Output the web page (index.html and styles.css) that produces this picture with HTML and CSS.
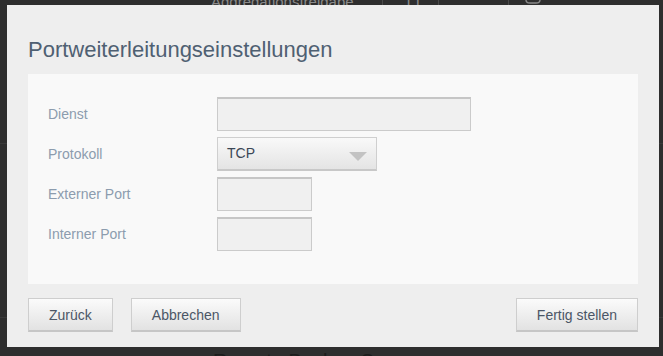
FILE: index.html
```html
<!DOCTYPE html>
<html lang="de">
<head>
<meta charset="utf-8">
<title>Portweiterleitungseinstellungen</title>
<link rel="stylesheet" href="styles.css">
</head>
<body>
<div class="page">
  <div class="bg-head">
    <div class="bg-cell bg-name">Aggregationsfreigabe</div>
    <div class="bg-cell bg-num">TT</div>
    <div class="bg-cell bg-empty"></div>
    <div class="bg-cell bg-icon">
      <svg width="18" height="5" viewBox="0 0 18 5"><path d="M2 0 Q2 3 6 3 L12 3 Q16 3 16 0" fill="none" stroke="#8a8a8a" stroke-width="1.4"/></svg>
    </div>
  </div>
  <div class="bg-row bg-row1"></div>
  <div class="bg-row bg-row2"></div>
  <div class="bg-title">Remote Backup Server</div>
</div>

<div class="dialog">
  <h1 class="dialog-title">Portweiterleitungseinstellungen</h1>
  <div class="panel">
    <div class="form-grid">
      <div class="label">Dienst</div>
      <div class="field"><div class="input input-wide"></div></div>
      <div class="label">Protokoll</div>
      <div class="field">
        <div class="select"><span class="select-value">TCP</span><span class="select-arrow"></span></div>
      </div>
      <div class="label">Externer Port</div>
      <div class="field"><div class="input input-port"></div></div>
      <div class="label">Interner Port</div>
      <div class="field"><div class="input input-port"></div></div>
    </div>
  </div>
  <div class="actions">
    <button class="btn">Zurück</button>
    <button class="btn">Abbrechen</button>
    <span class="spacer"></span>
    <button class="btn">Fertig stellen</button>
  </div>
</div>
</body>
</html>
```

FILE: styles.css
```css
html, body {
  margin: 0;
  padding: 0;
}
body {
  background: #2e2e2e;
  font-family: "Liberation Sans", Arial, sans-serif;
  overflow: hidden;
  width: 663px;
  height: 356px;
}
.page {
  height: 356px;
  overflow: hidden;
}
.bg-head {
  height: 5px;
  overflow: hidden;
  display: flex;
  align-items: flex-end;
}
.bg-cell {
  height: 5px;
  display: flex;
  align-items: flex-end;
  box-sizing: border-box;
  color: #8a8a8a;
  font-size: 15px;
  line-height: 5px;
}
.bg-name {
  width: 382px;
  padding-left: 211px;
  padding-bottom: 2px;
  line-height: 3px;
  height: 5px;
}
.bg-num {
  width: 56px;
  padding-left: 21px;
  padding-bottom: 2px;
  border-left: 1px solid #4a4a4a;
  line-height: 3px;
}
.bg-empty {
  width: 70px;
  border-left: 1px solid #4a4a4a;
}
.bg-icon {
  border-left: 1px solid #4a4a4a;
  padding-left: 15px;
  align-items: flex-start;
}
.bg-row {
  border-bottom: 1px solid #3a3a3a;
}
.bg-row1 { height: 138px; }
.bg-row2 { height: 173px; }
.bg-title {
  margin-top: 31px;
  padding-left: 213px;
  font-size: 20px;
  line-height: 24px;
  color: #1c1c1c;
}

.dialog {
  position: absolute;
  left: 7px;
  top: 5px;
  width: 652px;
  height: 342px;
  box-sizing: border-box;
  background: #eeeeee;
  padding: 32px 21px 15px;
  display: flex;
  flex-direction: column;
}
.dialog-title {
  margin: 0 0 11px;
  font-weight: normal;
  font-size: 22px;
  line-height: 26px;
  color: #4f6072;
}
.panel {
  background: #f9f9f9;
  height: 210px;
  box-sizing: border-box;
  padding: 23px 20px 33px;
}
.form-grid {
  display: grid;
  grid-template-columns: 169px 1fr;
  grid-auto-rows: 34px;
  row-gap: 6px;
  align-items: center;
}
.label {
  font-size: 14px;
  color: #8c9cae;
}
.field {
  display: flex;
  align-items: center;
  height: 34px;
}
.input {
  box-sizing: border-box;
  height: 34px;
  background: #f0f0f0;
  border: 1px solid #cbcbcb;
  border-top: 2px solid #c6c6c6;
}
.input-wide { width: 254px; }
.input-port { width: 95px; }
.select {
  box-sizing: border-box;
  width: 160px;
  height: 34px;
  display: flex;
  align-items: center;
  justify-content: space-between;
  padding: 0 9px 0 9px;
  background: linear-gradient(#f9f9f9, #e4e4e4);
  border: 1px solid #cfcfcf;
  border-bottom: 2px solid #c8c8c8;
}
.select-value {
  font-size: 14px;
  color: #3b4756;
  margin-top: -2px;
}
.select-arrow {
  width: 0;
  height: 0;
  border-left: 9px solid transparent;
  border-right: 9px solid transparent;
  border-top: 9px solid #c3c3c3;
  margin-top: 6px;
}
.actions {
  margin-top: 14px;
  display: flex;
  gap: 18px;
}
.spacer { flex: 1; }
.btn {
  box-sizing: border-box;
  height: 34px;
  padding: 0 20px;
  font-family: "Liberation Sans", Arial, sans-serif;
  font-size: 14px;
  color: #4b5666;
  background: linear-gradient(#fbfbfb, #e2e2e2);
  border: 1px solid #cecece;
  border-bottom: 2px solid #c6c6c6;
  border-radius: 0;
}
```
